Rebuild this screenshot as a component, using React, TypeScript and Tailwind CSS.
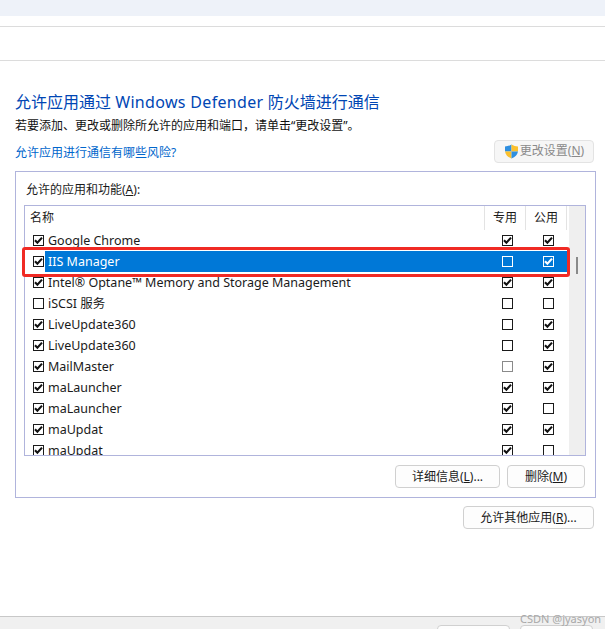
import React from "react";

const FONT = { fontFamily: '"Noto Sans", "Noto Sans CJK SC", "Liberation Sans", sans-serif' };

interface Row {
  name: string;
  on: boolean;
  priv: boolean;
  pub: boolean;
  disabled?: boolean;
  selected?: boolean;
}

const rows: Row[] = [
  { name: "Google Chrome", on: true, priv: true, pub: true },
  { name: "IIS Manager", on: true, priv: false, pub: true, selected: true },
  { name: "Intel® Optane™ Memory and Storage Management", on: true, priv: true, pub: true },
  { name: "iSCSI 服务", on: false, priv: false, pub: false },
  { name: "LiveUpdate360", on: true, priv: false, pub: true },
  { name: "LiveUpdate360", on: true, priv: false, pub: true },
  { name: "MailMaster", on: true, priv: false, pub: true, disabled: true },
  { name: "maLauncher", on: true, priv: true, pub: true },
  { name: "maLauncher", on: true, priv: true, pub: false },
  { name: "maUpdat", on: true, priv: true, pub: true },
  { name: "maUpdat", on: true, priv: true, pub: false },
];

function Check({ on, light, grey }: { on: boolean; light?: boolean; grey?: boolean }) {
  const border = light ? "border-white" : grey ? "border-[#8a8a8a]" : "border-[#1a1a1a]";
  return (
    <span className={`flex h-[11px] w-[11px] shrink-0 items-center justify-center border bg-transparent ${border}`}>
      {on && (
        <svg width="9" height="9" viewBox="0 0 9 9" fill="none">
          <path d="M1 4.2 L3.4 6.8 L8 1.6" stroke={light ? "#ffffff" : "#111111"} strokeWidth="2.1" />
        </svg>
      )}
    </span>
  );
}

function Shield() {
  return (
    <svg width="15" height="15" viewBox="0 0 15 15" className="shrink-0">
      <path d="M7.5 0.5 L7.5 7.5 L1 7.5 L1 2.5 Q4.5 2.5 7.5 0.5Z" fill="#2f8fe0" />
      <path d="M7.5 0.5 Q10.5 2.5 14 2.5 L14 7.5 L7.5 7.5Z" fill="#fbc02d" />
      <path d="M1 7.5 L7.5 7.5 L7.5 14.5 Q2 12.5 1 7.5Z" fill="#fbc02d" />
      <path d="M7.5 7.5 L14 7.5 Q13 12.5 7.5 14.5Z" fill="#2f8fe0" />
    </svg>
  );
}

function WinButton({ className, children }: { className: string; children: React.ReactNode }) {
  return (
    <div className={`flex h-[23px] items-center justify-center rounded-[4px] border border-[#d0d0d0] bg-[#fdfdfd] text-[12px] text-[#1a1a1a] ${className}`}>
      {children}
    </div>
  );
}

function ListRow({ row }: { row: Row }) {
  return (
    <div className="flex h-[21px] shrink-0 items-center">
      <div className="flex h-[21px] w-[460px] items-center pl-[8px]">
        <Check on={row.on} />
        <span
          className={`ml-[1px] flex h-[21px] flex-1 items-center whitespace-nowrap pl-[3px] pt-[1px] text-[12.5px] ${
            row.selected ? "bg-[#0078d7] text-white" : "text-[#1a1a1a]"
          }`}
        >
          {row.name}
        </span>
      </div>
      <div className={`flex h-[21px] w-[82px] items-center ${row.selected ? "bg-[#0078d7]" : ""}`}>
        <div className="flex w-[41px] justify-center pl-[3px]">
          <Check on={row.priv} light={row.selected} grey={row.disabled} />
        </div>
        <div className="flex w-[41px] justify-center pl-[3px]">
          <Check on={row.pub} light={row.selected} />
        </div>
      </div>
    </div>
  );
}

export default function App() {
  return (
    <div className="relative flex h-[629px] w-[605px] flex-col overflow-hidden bg-white" style={FONT}>
      <div className="h-4 shrink-0 bg-[#eef2f9]" />
      <div className="h-[11px] shrink-0 border-b border-[#dcdcdc]" />
      <div className="h-[34px] shrink-0 border-b border-[#dcdcdc]" />

      <div className="flex flex-1 flex-col pl-[15px] pr-[11px]">
        <h1 className="mt-[30px] h-[23px] text-[16px] leading-[23px] text-[#0046b4] whitespace-nowrap">
          允许应用通过 <span className="tracking-[0.33px]">Windows Defender</span> 防火墙进行通信
        </h1>
        <p className="mt-[3px] h-[17px] text-[12px] leading-[17px] text-[#111] whitespace-nowrap">
          若要添加、更改或删除所允许的应用和端口，请单击“更改设置”。
        </p>
        <div className="mt-[5px] flex h-[24px] items-center justify-between">
          <a className="mt-[3px] text-[12px] text-[#0066cc]">允许应用进行通信有哪些风险?</a>
          <div className="flex h-[23px] w-[100px] items-center justify-center gap-[1px] rounded-[4px] border border-[#e3e3e3] bg-[#f6f6f6] text-[12px] text-[#8a8a8a]">
            <Shield />
            <span>更改设置(<u>N</u>)</span>
          </div>
        </div>

        <div className="mt-[8px] h-[327px] w-[581px] shrink-0 border border-[#b0b4dc] pl-2 pt-[9px]">
          <div className="h-[24px] pl-[2px] text-[12px] leading-[18px] text-[#1a1a1a]">
            允许的应用和功能(<u>A</u>):
          </div>
          <div className="flex h-[251px] w-[562px] border border-[#b0b4dc]">
            <div className="flex w-[544px] flex-col overflow-hidden">
              <div className="flex h-[24px] shrink-0 text-[12px] text-[#1a1a1a]">
                <div className="flex w-[460px] items-center border-r border-[#e3e3e3] pl-[5px]">名称</div>
                <div className="flex w-[41px] items-center justify-center border-r border-[#e3e3e3]">专用</div>
                <div className="flex w-[41px] items-center justify-center border-r border-[#e3e3e3]">公用</div>
              </div>
              {rows.map((row, i) => (
                <ListRow key={i} row={row} />
              ))}
            </div>
            <div className="flex flex-1 justify-center bg-[#efefef] pt-[51px]">
              <div className="h-[17px] w-[2px] bg-[#8a8a8a]" />
            </div>
          </div>
          <div className="mt-[9px] flex justify-end gap-[7px] pr-[10px]">
            <WinButton className="w-[105px]">
              <span>详细信息(<u>L</u>)...</span>
            </WinButton>
            <WinButton className="w-[78px]">
              <span>删除(<u>M</u>)</span>
            </WinButton>
          </div>
        </div>

        <div className="mt-[8px] flex justify-end">
          <WinButton className="w-[131px]">
            <span>允许其他应用(<u>R</u>)...</span>
          </WinButton>
        </div>
      </div>

      <div className="flex h-[13px] shrink-0 justify-end gap-[10px] overflow-hidden border-t border-[#c8c8c8] bg-[#f0f0f0] pr-[12px] pt-[8px]">
        <div className="h-6 w-[73px] rounded-[4px] border border-[#d0d0d0] bg-[#fdfdfd]" />
        <div className="h-6 w-[73px] rounded-[4px] border border-[#d0d0d0] bg-[#fdfdfd]" />
      </div>

      {/* red annotation around the selected row */}
      <div className="absolute left-[22px] top-[247px] h-[30px] w-[548px] rounded-[3px] border-[3px] border-[#f02a24]" />
      <span className="absolute left-[520px] top-[609px] text-[11px] leading-[20px] text-[#a8a8a8]">CSDN @jyasyon</span>
    </div>
  );
}
